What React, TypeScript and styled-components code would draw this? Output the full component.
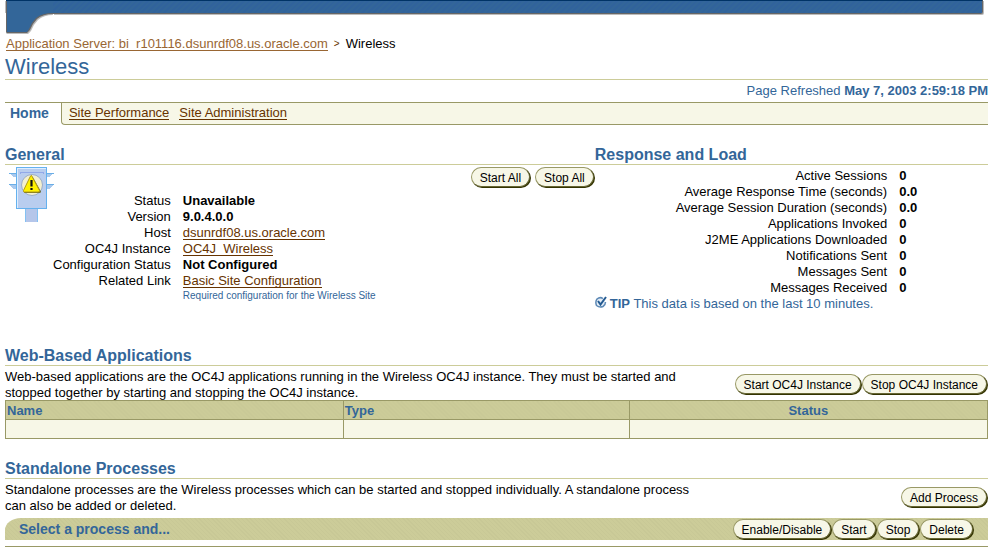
import React from "react";
import styled, { createGlobalStyle } from "styled-components";

const blue = "#336699";
const olive = "#999966";
const khaki = "#cccc99";
const cream = "#f7f7e7";

const GlobalStyle = createGlobalStyle`
  * { box-sizing: border-box; }
  body {
    margin: 0;
    background: #fff;
    color: #000;
    font: 13px/16px "Liberation Sans", Arial, sans-serif;
  }
`;

const Page = styled.div`
  padding: 0 8px 0 5px;
`;

const Banner = styled.header`
  display: flex;
  align-items: flex-start;
  padding-right: 5px;
  height: 35px;
`;

const BannerBar = styled.div`
  flex: 1;
  height: 14px;
  background: repeating-linear-gradient(135deg, #336699 0 2px, #31639c 2px 4px);
  border-top: 1px solid #003366;
  border-right: 1px solid #666;
  border-bottom: 1px solid #666;
  border-radius: 0 0 2px 0;
  box-shadow: 1px 1px 0 #bbb;
`;

const Breadcrumbs = styled.nav`
  display: flex;
  gap: 6px;
  padding: 1px;
  height: 18px;
`;

const Link = styled.a<{ $light?: boolean }>`
  color: ${(p) => (p.$light ? "#996633" : "#663300")};
  text-decoration: none;
  border-bottom: 1px solid currentColor;
  line-height: 16px;
  height: 15px;
  white-space: nowrap;
`;

const Separator = styled.span`
  color: #663300;
  font-size: 10px;
`;

const Title = styled.h1`
  margin: 0;
  padding-top: 2px;
  color: ${blue};
  font-size: 22px;
  font-weight: 400;
  line-height: 24px;
  border-bottom: 1px solid ${khaki};
`;

const Refreshed = styled.p`
  margin: 0;
  padding: 3px 0;
  color: ${blue};
  text-align: right;
`;

const Tabs = styled.nav`
  display: flex;
  height: 23px;
  border-top: 1px solid ${olive};
`;

const ActiveTab = styled.span`
  padding: 2px 12px 0 5px;
  color: ${blue};
  font-size: 14px;
  font-weight: 700;
`;

const TabStrip = styled.div`
  flex: 1;
  display: flex;
  gap: 10px;
  padding: 2px 7px;
  background: ${cream};
  border-left: 1px solid ${olive};
  border-bottom: 1px solid ${olive};
  border-bottom-left-radius: 4px;
`;

const Columns = styled.div`
  display: grid;
  grid-template-columns: 3fr 2fr;
  margin-top: 20px;
`;

const Section = styled.section<{ $gap?: number }>`
  margin-top: ${(p) => p.$gap ?? 0}px;
`;

const Heading = styled.h2`
  margin: 0;
  color: ${blue};
  font-size: 16px;
  line-height: 19px;
  border-bottom: 1px solid ${khaki};
`;

const GeneralBody = styled.div`
  display: flex;
  align-items: flex-start;
  padding-top: 2px;
`;

const IconSlot = styled.div`
  width: 48px;
  padding-left: 4px;
`;

const Details = styled.dl`
  display: grid;
  grid-template-columns: max-content 1fr;
  column-gap: 12px;
  flex: 1;
  margin: 26px 0 0;
`;

const Stats = styled(Details)`
  grid-template-columns: 3fr 1fr;
  margin: 3px 0 0;
  padding-left: 26px;
`;

const Term = styled.dt`
  text-align: right;
`;

const Value = styled.dd<{ $plain?: boolean }>`
  display: flex;
  margin: 0;
  font-weight: ${(p) => (p.$plain ? 400 : 700)};
`;

const Note = styled.dd`
  grid-column: 2;
  margin: 0;
  color: ${blue};
  font-size: 10px;
  line-height: 13px;
`;

const Tip = styled.p`
  display: flex;
  align-items: center;
  gap: 3px;
  margin: 0;
  color: ${blue};
`;

const Intro = styled.div<{ $height: number }>`
  display: flex;
  justify-content: space-between;
  align-items: flex-start;
  padding-top: 3px;
  height: ${(p) => p.$height}px;
`;

const Description = styled.p`
  margin: 0;
  width: 71%;
`;

const Actions = styled.div<{ $gap?: number; $top?: number }>`
  display: flex;
  flex: none;
  gap: ${(p) => p.$gap ?? 0}px;
  padding-top: ${(p) => p.$top ?? 0}px;
`;

const Button = styled.button`
  height: 20px;
  margin: 0 1px 1px 0;
  padding: 1px 8px 0;
  font: 12px/18px "Liberation Sans", Arial, sans-serif;
  color: #000;
  white-space: nowrap;
  background: ${cream};
  border: 1px solid;
  border-color: ${olive} #666633 #666633 ${olive};
  border-radius: 10px;
  box-shadow: 1px 1px 0 #333300;
`;

const Table = styled.table`
  width: 100%;
  table-layout: fixed;
  border-collapse: collapse;
`;

const HeadCell = styled.th<{ $width: number; $center?: boolean }>`
  width: ${(p) => p.$width}%;
  height: 19px;
  padding: 2px 1px 0;
  color: ${blue};
  line-height: 16px;
  text-align: ${(p) => (p.$center ? "center" : "left")};
  background: repeating-linear-gradient(45deg, #cccc99 0 2px, #c8c896 2px 3px);
  border: 1px solid ${olive};
`;

const Cell = styled.td`
  height: 19px;
  padding: 0;
  background: ${cream};
  border: 1px solid ${olive};
`;

const ActionBar = styled.div`
  display: flex;
  justify-content: space-between;
  padding: 0 14px;
  height: 22px;
  background: repeating-linear-gradient(45deg, #cccc99 0 2px, #c8c896 2px 3px);
  border-top-left-radius: 16px 12px;
`;

const ActionLabel = styled.strong`
  color: ${blue};
  font-size: 14px;
  line-height: 22px;
`;

const Rule = styled.hr`
  margin: 6px 0 0;
  border: 0;
  border-top: 1px solid ${olive};
`;

const BannerCorner = () => (
  <svg width="48" height="35" viewBox="0 0 48 35" aria-hidden="true">
    <path d="M0 1H1V33L2 34H23L26 31Q28 25 33 20Q39 15 48 15V13H0Z" fill="#bbb" />
    <path d="M1 1V32L2 33H22L25 30Q27 24 32 19Q38 14 48 14V0H1Z" fill="#666" />
    <path d="M2 1V32H22L24 29Q26 23 31 18Q37 13 48 13V0H2Z" fill={blue} />
    <path d="M1 0.500H48" stroke="#003366" />
  </svg>
);

const TrafficLight = () => (
  <svg width="45" height="56" viewBox="0 0 45 56" role="img" aria-label="Warning" shapeRendering="crispEdges">
    <path d="M0 6H8V10H5ZM0 17H8V22H4ZM45 6H37V10H40ZM45 17H37V22H41Z" fill="#a9c9ee" />
    <path d="M0 6.500H8M0 17.500H8M37 6.500H45M37 17.500H45" stroke="#6aaee6" />
    <rect x="16" y="41" width="13" height="14" fill="#b5c6ea" />
    <path d="M16.500 41V55" stroke="#84c1f2" />
    <path d="M28.500 41V55" stroke="#84c1f2" />
    <rect x="7.500" y="0.500" width="30" height="41" fill="#b9cdef" stroke="#65b1ee" />
    <path d="M8.500 41V1.500H37" stroke="#def" fill="none" />
    <path d="M11 7V5H34V7" stroke="#92a9e8" fill="none" />
    <g shapeRendering="auto">
      <circle cx="23" cy="18" r="10.500" fill="#f4f0cf" stroke="#9badc8" />
      <path d="M23.500 9.500L32 24.500Q32 26 30 26H16Q14.500 26 15 24Z" fill="#6b6b31" />
      <path d="M22.500 8.500L30.500 23.500Q31 25 29 25H15.500Q14 25 14.500 23.500L21 10Q22 8 22.500 8.500Z" fill="#fff200" stroke="#b29c16" />
      <path d="M22.500 13V19.500M22.500 21V23" stroke="#111" strokeWidth="2.200" />
    </g>
  </svg>
);

const TipIcon = () => (
  <svg width="12" height="16" viewBox="0 0 12 16" aria-hidden="true">
    <path d="M8 2.500Q5 0.500 2 3Q0 6 1.500 9.500Q4.500 12 8 10.500Q10.500 9 10.500 6" fill="#e4edf6" stroke="#5d89b5" strokeWidth="1.500" />
    <path d="M3 5L5.500 8.500L11 1" fill="none" stroke="#235a91" strokeWidth="2" />
  </svg>
);

const stats: [string, string][] = [
  ["Active Sessions", "0"],
  ["Average Response Time (seconds)", "0.0"],
  ["Average Session Duration (seconds)", "0.0"],
  ["Applications Invoked", "0"],
  ["J2ME Applications Downloaded", "0"],
  ["Notifications Sent", "0"],
  ["Messages Sent", "0"],
  ["Messages Received", "0"],
];

export default function App() {
  return (
    <>
      <GlobalStyle />
      <Page>
        <Banner>
          <BannerCorner />
          <BannerBar />
        </Banner>
        <Breadcrumbs aria-label="Breadcrumb">
          <Link $light href="#server">Application Server: bi_r101116.dsunrdf08.us.oracle.com</Link>
          <Separator>&gt;</Separator>
          <span>Wireless</span>
        </Breadcrumbs>
        <Title>Wireless</Title>
        <Refreshed>
          Page Refreshed <strong>May 7, 2003 2:59:18 PM</strong>
        </Refreshed>
        <Tabs aria-label="Sections">
          <ActiveTab aria-current="page">Home</ActiveTab>
          <TabStrip>
            <Link href="#performance">Site Performance</Link>
            <Link href="#administration">Site Administration</Link>
          </TabStrip>
        </Tabs>

        <Columns>
          <Section>
            <Heading>General</Heading>
            <GeneralBody>
              <IconSlot>
                <TrafficLight />
              </IconSlot>
              <Details>
                <Term>Status</Term>
                <Value>Unavailable</Value>
                <Term>Version</Term>
                <Value>9.0.4.0.0</Value>
                <Term>Host</Term>
                <Value $plain><Link href="#host">dsunrdf08.us.oracle.com</Link></Value>
                <Term>OC4J Instance</Term>
                <Value $plain><Link href="#instance">OC4J_Wireless</Link></Value>
                <Term>Configuration Status</Term>
                <Value>Not Configured</Value>
                <Term>Related Link</Term>
                <Value $plain><Link href="#configuration">Basic Site Configuration</Link></Value>
                <Note>Required configuration for the Wireless Site</Note>
              </Details>
              <Actions $gap={4}>
                <Button>Start All</Button>
                <Button>Stop All</Button>
              </Actions>
            </GeneralBody>
          </Section>
          <Section>
            <Heading>Response and Load</Heading>
            <Stats>
              {stats.map(([label, value]) => (
                <React.Fragment key={label}>
                  <Term>{label}</Term>
                  <Value>{value}</Value>
                </React.Fragment>
              ))}
            </Stats>
            <Tip>
              <TipIcon />
              <span><strong>TIP</strong> This data is based on the last 10 minutes.</span>
            </Tip>
          </Section>
        </Columns>

        <Section $gap={34}>
          <Heading>Web-Based Applications</Heading>
          <Intro $height={34}>
            <Description>
              Web-based applications are the OC4J applications running in the Wireless OC4J instance. They must be started and stopped together by starting and stopping the OC4J instance.
            </Description>
            <Actions $top={5}>
              <Button>Start OC4J Instance</Button>
              <Button>Stop OC4J Instance</Button>
            </Actions>
          </Intro>
          <Table>
            <thead>
              <tr>
                <HeadCell $width={34.4}>Name</HeadCell>
                <HeadCell $width={29.1}>Type</HeadCell>
                <HeadCell $width={36.5} $center>Status</HeadCell>
              </tr>
            </thead>
            <tbody>
              <tr>
                <Cell />
                <Cell />
                <Cell />
              </tr>
            </tbody>
          </Table>
        </Section>

        <Section $gap={20}>
          <Heading>Standalone Processes</Heading>
          <Intro $height={39}>
            <Description>
              Standalone processes are the Wireless processes which can be started and stopped individually. A standalone process can also be added or deleted.
            </Description>
            <Actions $top={5}>
              <Button>Add Process</Button>
            </Actions>
          </Intro>
          <ActionBar>
            <ActionLabel>Select a process and...</ActionLabel>
            <Actions $top={1}>
              <Button>Enable/Disable</Button>
              <Button>Start</Button>
              <Button>Stop</Button>
              <Button>Delete</Button>
            </Actions>
          </ActionBar>
          <Rule />
        </Section>
      </Page>
    </>
  );
}
